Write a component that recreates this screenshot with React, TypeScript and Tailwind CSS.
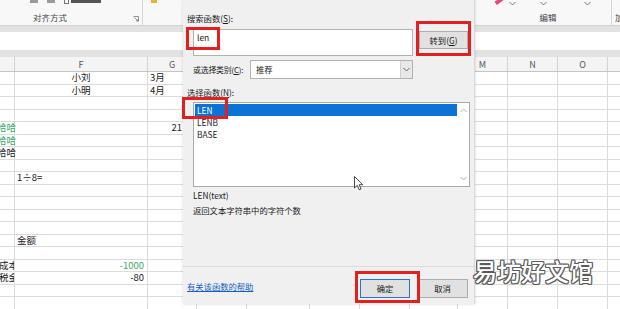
import React from 'react';

type Cell = { text: string; box?: string; span?: string };

const cols = [
  { w: 'w-[15px]', label: '' },
  { w: 'w-[133px]', label: 'F' },
  { w: 'w-[49px]', label: 'G' },
  { w: 'w-[50px]', label: 'H' },
  { w: 'w-[63px]', label: 'I' },
  { w: 'w-[50px]', label: 'J' },
  { w: 'w-[50px]', label: 'K' },
  { w: 'w-[48px]', label: 'L' },
  { w: 'w-[50px]', label: 'M' },
  { w: 'w-[50px]', label: 'N' },
  { w: 'w-[50px]', label: 'O' },
  { w: 'w-[40px]', label: '' },
];

const green = 'text-[#39a866]';

const cells: Record<string, Cell> = {
  '0-1': { text: '小刘', box: 'justify-center' },
  '0-2': { text: '3月', box: 'pl-[2px]' },
  '1-1': { text: '小明', box: 'justify-center' },
  '1-2': { text: '4月', box: 'pl-[2px]' },
  '4-0': { text: '哈哈', span: '-ml-[3px] text-[#39a866]' },
  '4-2': { text: '21', box: 'justify-end pr-[14px]' },
  '5-0': { text: '哈哈', span: '-ml-[3px] text-[#39a866]' },
  '6-0': { text: '哈哈', span: '-ml-[3px]' },
  '8-1': { text: '1÷8=', box: 'pl-[2px]' },
  '13-1': { text: '金额', box: 'pl-[2px]' },
  '15-0': { text: '成本', box: 'overflow-hidden', span: '-ml-[1px]' },
  '15-1': { text: '-1000', box: 'justify-end pr-[3px]', span: green },
  '16-0': { text: '税金', box: 'overflow-hidden', span: '-ml-[1px]' },
  '16-1': { text: '-80', box: 'justify-end pr-[3px]' },
};

const Chevron = ({ up = false, color = '#8a8a8a' }: { up?: boolean; color?: string }) => (
  <svg width="7" height="5" viewBox="0 0 7 5">
    <path d={up ? 'M0.5 4L3.5 1L6.5 4' : 'M0.5 1L3.5 4L6.5 1'} fill="none" stroke={color} strokeWidth="1" />
  </svg>
);

const Ribbon = () => (
  <div className="flex h-[25px] bg-[#f8f8f8]">
    <div className="w-[143px] shrink-0 border-r border-[#d6d6d6] flex flex-col">
      <div className="flex items-start gap-[9px] pl-[30px] h-[12px]">
        <div className="w-[8px] h-[3px] bg-[#9a9a9a]" />
        <div className="w-[8px] h-[3px] bg-[#9a9a9a]" />
        <div className="flex items-start gap-[2px]">
          <div className="w-[5px] h-[4px] border border-[#777] border-t-0" />
          <div className="w-[30px] h-[3px] bg-[#555]" />
        </div>
      </div>
      <div className="flex items-center h-[11px]">
        <span className="ml-[33px] text-[8.5px] leading-none text-[#444]">对齐方式</span>
        <svg className="ml-auto mr-[3px] mt-[2px]" width="6" height="6" viewBox="0 0 6 6">
          <path d="M0.5 0.5H5.5V5.5M1.5 1.5L5 5M3 5H5V3" fill="none" stroke="#777" strokeWidth="0.8" />
        </svg>
      </div>
    </div>
    <div className="w-[342px] shrink-0 pl-[8px]">
      <div className="w-[6px] h-[3px] bg-[#e8b33a]" />
    </div>
    <div className="w-[127px] shrink-0 border-r border-[#d6d6d6] flex flex-col">
      <div className="flex items-start h-[12px] relative">
        <div className="ml-[10px] w-[8px] h-[4px] bg-[#e0487e] rotate-[-35deg] -mt-[1px]" />
        <div className="ml-[6px] mt-[1px]"><Chevron color="#777" /></div>
        <div className="ml-[24px] mt-[1px]"><Chevron color="#777" /></div>
        <div className="ml-[37px] mt-[1px]"><Chevron color="#777" /></div>
      </div>
      <div className="flex justify-center h-[11px] items-center">
        <span className="text-[8.5px] leading-none text-[#444]">编辑</span>
      </div>
    </div>
    <div className="flex-1 flex flex-col">
      <div className="h-[12px]" />
      <span className="pl-[3px] text-[8.5px] leading-[11px] text-[#444]">加</span>
    </div>
  </div>
);

const Sheet = () => (
  <div className="flex flex-col">
    <Ribbon />
    <div className="h-[7px] bg-[#e2e2e2] border-t border-[#d4d4d4]" />
    <div className="h-[18px] bg-white" />
    <div className="h-[7px] bg-[#e2e2e2]" />
    <div className="flex h-[15px] bg-[#f4f4f4] border-b border-[#c4c4c4]">
      {cols.map((c, i) => (
        <div
          key={i}
          className={`${c.w} shrink-0 border-r border-[#d2d2d2] flex items-center justify-center text-[9px] leading-none text-[#555]`}
        >
          {c.label}
        </div>
      ))}
    </div>
    {Array.from({ length: 19 }).map((_, r) => (
      <div key={r} className="flex h-[12.5px]">
        {cols.map((c, ci) => {
          const cell = cells[`${r}-${ci}`];
          return (
            <div
              key={ci}
              className={`${c.w} shrink-0 h-full border-r border-b border-[#dcdcdc] flex items-center whitespace-nowrap text-[9.5px] leading-none text-[#222] ${cell?.box ?? ''}`}
            >
              {cell && <span className={cell.span ?? ''}>{cell.text}</span>}
            </div>
          );
        })}
      </div>
    ))}
  </div>
);

const Dialog = () => (
  <div className="absolute left-[183px] top-0 w-[292px] h-[304px] bg-[#f0f0f0] border-r border-[#d8d8d8] flex flex-col text-[8.3px] leading-none text-[#1a1a1a] shadow-[0_0_3px_rgba(0,0,0,0.15)]">
    <div className="pl-[4px] mt-[12px] h-[12px] flex items-center">
      搜索函数(<span className="underline">S</span>):
    </div>
    <div className="flex items-start mt-[5px] pl-[10px]">
      <div className="w-[220px] h-[27px] bg-white border border-[#b2b2b2] px-[3px] pt-[1px] leading-[12px] text-[8.5px]">
        len
      </div>
      <div className="ml-[6px] mt-[2px] w-[49px] h-[18px] bg-[#e1e1e1] border border-[#adadad] flex items-center justify-center">
        转到(<span className="underline">G</span>)
      </div>
    </div>
    <div className="flex items-center mt-[4px] pl-[10px] h-[19px]">
      <span className="w-[57px] whitespace-nowrap text-[7.9px] tracking-[-0.2px]">
        或选择类别(<span className="underline">C</span>):
      </span>
      <div className="w-[163px] h-[19px] bg-white border border-[#b2b2b2] flex items-center">
        <span className="flex-1 pl-[5px]">推荐</span>
        <span className="w-[12px] h-full bg-[#e8e8e8] border-l border-[#cfcfcf] flex items-center justify-center">
          <Chevron color="#666" />
        </span>
      </div>
    </div>
    <div className="pl-[4px] mt-[7px] h-[12px] flex items-center">
      选择函数(<span className="underline">N</span>):
    </div>
    <div className="mt-[4px] ml-[10px] w-[277px] h-[85px] bg-white border border-[#a9a9a9] flex">
      <div className="flex-1 pl-[1px] pt-[1px]">
        <div className="h-[12px] bg-[#0a73d5] text-white pl-[2px] flex items-center">LEN</div>
        <div className="h-[12px] pl-[2px] flex items-center">LENB</div>
        <div className="h-[12px] pl-[2px] flex items-center">BASE</div>
      </div>
      <div className="w-[12px] flex flex-col justify-between items-center py-[5px]">
        <Chevron up color="#b0b0b0" />
        <Chevron color="#b0b0b0" />
      </div>
    </div>
    <div className="pl-[10px] mt-[3px] h-[11px] flex items-center">LEN(text)</div>
    <div className="pl-[10px] mt-[4px] h-[11px] flex items-center">返回文本字符串中的字符个数</div>
    <div className="flex-1" />
    <div className="h-[38px] border-t border-[#dcdcdc] flex items-start pt-[12px]">
      <span className="ml-[4px] mt-[1px] h-[12px] flex items-center text-[#1060c8] underline">有关该函数的帮助</span>
      <div className="ml-auto mr-[6px] flex gap-[7px]">
        <div className="w-[50px] h-[19px] bg-[#e1e1e1] border border-[#1e78d2] flex items-center justify-center">确定</div>
        <div className="w-[51px] h-[19px] bg-[#e1e1e1] border border-[#adadad] flex items-center justify-center">取消</div>
      </div>
    </div>
  </div>
);

export default function App() {
  return (
    <div className="relative w-[620px] h-[309px] overflow-hidden bg-white font-['Noto_Sans_CJK_SC','Noto_Sans',sans-serif]">
      <Sheet />
      <Dialog />

      <div className="absolute left-[186px] top-[27px] w-[34px] h-[23px] border-[3px] border-[#e2201f]" />
      <div className="absolute left-[416px] top-[21px] w-[55px] h-[35px] border-[3px] border-[#e2201f]" />
      <div className="absolute left-[182px] top-[97px] w-[46px] h-[22px] border-[3px] border-[#e2201f]" />
      <div className="absolute left-[355px] top-[271px] w-[65px] h-[32px] border-[3px] border-[#e2201f]" />

      <svg className="absolute left-[354px] top-[176px]" width="10" height="15" viewBox="0 0 10 15">
        <path d="M0.5 0.5V12L3.3 9.4L5.2 13.8L7 13L5.2 8.7H8.8Z" fill="white" stroke="#333" strokeWidth="0.9" strokeLinejoin="round" />
      </svg>

      <div className="absolute left-[473px] top-[259px] text-[24px] leading-none text-white font-medium whitespace-nowrap [text-shadow:1px_0_#5a5a5a,-1px_0_#5a5a5a,0_1px_#5a5a5a,0_-1px_#5a5a5a,1px_1px_#5a5a5a,-1px_-1px_#5a5a5a,1px_-1px_#5a5a5a,-1px_1px_#5a5a5a]">
        易坊好文馆
      </div>
    </div>
  );
}
